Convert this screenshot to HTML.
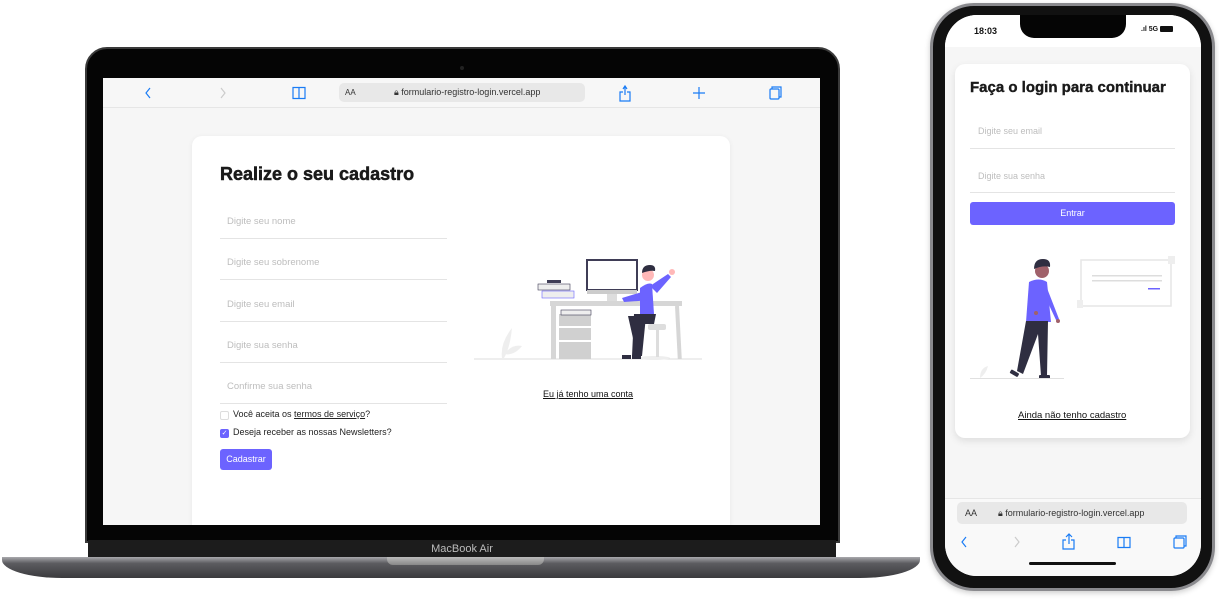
<!DOCTYPE html>
<html><head><meta charset="utf-8"><style>
*{margin:0;padding:0;box-sizing:border-box}
body{width:1219px;height:603px;background:#fff;position:relative;overflow:hidden;font-family:"Liberation Sans",sans-serif}
.abs{position:absolute}
.lap{left:85px;top:47px;width:755px;height:496px;background:#050505;border-radius:22px 22px 0 0;border:2px solid #3a3a3a}
.scr{left:103px;top:78px;width:717px;height:447px;background:#f6f6f6;overflow:hidden}
.bar{left:0;top:0;width:717px;height:30px;background:#f7f7f7;border-bottom:1px solid #e6e6e6}
.url{left:236px;top:5px;width:246px;height:19px;background:#e8e8e8;border-radius:5px;font-size:9px;color:#333;line-height:19px}
.card{left:89px;top:58px;width:538px;height:400px;background:#fff;border-radius:10px;box-shadow:0 1px 6px rgba(0,0,0,.06)}
.in{position:absolute;left:28px;width:227px;height:41px;border-bottom:1px solid #e4e4e4;font-size:9.5px;color:#bdbdbd;padding:18px 0 0 7px}
.chin{left:88px;top:540px;width:748px;height:18px;background:#1c1c1c;color:#bbb;font-size:11px;text-align:center;line-height:18px}
.base{left:2px;top:557px;width:918px;height:21px;background:linear-gradient(#a9a9ad,#5c5c60 30%,#3a3a3d);border-radius:0 0 60px 60px/0 0 18px 18px}
.ph{left:930px;top:3px;width:285px;height:588px;background:#111;border-radius:44px;border:3px solid #8a8a8e;box-shadow:0 2px 6px rgba(0,0,0,.2)}
.ps{left:945px;top:15px;width:256px;height:561px;background:#f6f6f6;border-radius:32px;overflow:hidden}
</style></head><body>
<div class="abs lap"></div>
<div class="abs" style="left:460px;top:66px;width:4px;height:4px;border-radius:50%;background:#222"></div>
<div class="abs scr">
 <div class="abs bar">
  <svg class="abs" style="left:0;top:0" width="717" height="30" fill="none" stroke="#1a7cf5" stroke-width="1.2">
   <path d="M47 10l-4 5 4 5"/><path d="M118 10l4 5-4 5" stroke="#ccc"/>
   <path d="M190 9.5h6v11h-6zM196 9.5h6v11h-6z"/>
   <path d="M520 14h-3v9h10v-9h-3M520 11l2-3 2 3M522 8v9"/>
   <path d="M596 9v12M590 15h12"/>
   <rect x="667" y="11" width="9" height="10" rx="1"/><path d="M669 11v-2h9v10h-2"/>
   <path d="M476 11a4 4 0 1 0 2 3" stroke="#333"/>
  </svg>
  <div class="abs url"><span style="position:absolute;left:6px;font-size:8px">AA</span><span style="position:absolute;left:55px">&#128274;&#xFE0E; formulario-registro-login.vercel.app</span></div>
 </div>
 <div class="abs card">
  <div class="abs" style="left:28px;top:28px;font-size:18px;font-weight:900;color:#1a1a1a;-webkit-text-stroke:.5px #1a1a1a">Realize o seu cadastro</div>
  <div class="in" style="top:62px">Digite seu nome</div>
  <div class="in" style="top:103px">Digite seu sobrenome</div>
  <div class="in" style="top:145px">Digite seu email</div>
  <div class="in" style="top:186px">Digite sua senha</div>
  <div class="in" style="top:227px">Confirme sua senha</div>
  <div class="abs" style="left:28px;top:275px;width:9px;height:9px;border:1px solid #ddd;border-radius:2px"></div>
  <div class="abs" style="left:41px;top:273px;font-size:9px;color:#222">Você aceita os <u>termos de serviço</u>?</div>
  <div class="abs" style="left:28px;top:293px;width:9px;height:9px;background:#6c63ff;border-radius:2px;color:#fff;font-size:7px;line-height:9px;text-align:center">✓</div>
  <div class="abs" style="left:41px;top:291px;font-size:9px;color:#222">Deseja receber as nossas Newsletters?</div>
  <div class="abs" style="left:28px;top:313px;width:52px;height:21px;background:#6c63ff;border-radius:3px;color:#fff;font-size:9px;line-height:21px;text-align:center">Cadastrar</div>
  <svg class="abs" style="left:280px;top:122px" width="232" height="106">
   <path d="M30 100q-2-15 10-30q-2 20-8 30z" fill="#eee"/><path d="M32 96q8-10 18-8q-8 10-18 8z" fill="#eee"/>
   <line x1="2" y1="101" x2="230" y2="101" stroke="#ddd"/>
   <rect x="78" y="43" width="132" height="5" fill="#d6d6d6"/>
   <rect x="79" y="48" width="5" height="53" fill="#d6d6d6"/><rect x="203" y="48" width="4" height="53" fill="#d6d6d6" transform="rotate(-3 205 48)"/>
   <rect x="87" y="56" width="32" height="12" fill="#d0d0d0"/><rect x="87" y="70" width="32" height="12" fill="#d0d0d0"/><rect x="87" y="84" width="32" height="17" fill="#d0d0d0"/>
   <rect x="89" y="52" width="30" height="5" fill="#eee" stroke="#3f3d56" stroke-width=".6"/>
   <rect x="66" y="26" width="32" height="6" fill="#eee" stroke="#3f3d56" stroke-width=".6"/>
   <rect x="70" y="33" width="32" height="7" fill="#eee" stroke="#6c63ff" stroke-width=".6"/>
   <rect x="75" y="22" width="14" height="3" fill="#3f3d56"/>
   <rect x="115" y="2" width="50" height="30" fill="#fff" stroke="#3f3d56" stroke-width="2"/>
   <rect x="115" y="32" width="50" height="4" fill="#ccc"/><rect x="135" y="36" width="10" height="7" fill="#ddd"/>
   <path d="M168 30q8-6 12-4l2 30q-10 2-14 0z" fill="#6c63ff"/>
   <path d="M150 40l20-6l10 8l-28 2z" fill="#6c63ff"/>
   <path d="M178 28l18-12l3 3l-14 16z" fill="#6c63ff"/>
   <circle cx="200" cy="14" r="3" fill="#ffb8b8"/>
   <circle cx="176" cy="17" r="6" fill="#ffb8b8"/><path d="M170 15q0-8 8-8q6 0 5 6q-5-1-13 2z" fill="#2f2e41"/>
   <path d="M162 56h22l-2 10h-12l-4 32h-6z" fill="#2f2e41"/><path d="M156 58h18l-4 40h-5z" fill="#2f2e41"/>
   <ellipse cx="182" cy="100" rx="16" ry="2" fill="#eee"/>
   <rect x="176" y="66" width="18" height="6" rx="2" fill="#ddd"/><rect x="184" y="72" width="3" height="27" fill="#ddd"/>
   <rect x="150" y="97" width="9" height="4" fill="#2f2e41"/><rect x="160" y="97" width="9" height="4" fill="#2f2e41"/>
  </svg>
  <div class="abs" style="left:351px;top:253px;font-size:9px;color:#111;text-decoration:underline">Eu já tenho uma conta</div>
 </div>
</div>
<div class="abs chin">MacBook Air</div>
<div class="abs base"></div>
<div class="abs" style="left:387px;top:557px;width:157px;height:8px;background:linear-gradient(#bbb,#888);border-radius:0 0 6px 6px"></div>

<div class="abs ph"></div>
<div class="abs ps">
 <div class="abs" style="left:0;top:0;width:256px;height:32px;background:#fff"></div>
 <div class="abs" style="left:29px;top:11px;font-size:9px;font-weight:bold;color:#111">18:03</div>
 <div class="abs" style="left:196px;top:11px;font-size:7px;font-weight:bold;color:#111">.ıl 5G <span style="display:inline-block;width:13px;height:6px;background:#111;border-radius:1px;vertical-align:middle"></span></div>
 <div class="abs" style="left:75px;top:0;width:106px;height:23px;background:#050505;border-radius:0 0 14px 14px"></div>
 <div class="abs" style="left:10px;top:49px;width:235px;height:374px;background:#fff;border-radius:10px;box-shadow:0 3px 8px rgba(0,0,0,.1)"></div>
 <div class="abs" style="left:25px;top:64px;font-size:15px;font-weight:900;color:#1a1a1a;-webkit-text-stroke:.4px #1a1a1a">Faça o login para continuar</div>
 <div class="abs" style="left:25px;top:105px;width:205px;height:29px;border-bottom:1px solid #e4e4e4;font-size:9px;color:#bdbdbd;padding:6px 0 0 8px">Digite seu email</div>
 <div class="abs" style="left:25px;top:148px;width:205px;height:30px;border-bottom:1px solid #e4e4e4;font-size:9px;color:#bdbdbd;padding:8px 0 0 8px">Digite sua senha</div>
 <div class="abs" style="left:25px;top:187px;width:205px;height:23px;background:#6c63ff;border-radius:3px;color:#fff;font-size:9px;line-height:23px;text-align:center">Entrar</div>
 <svg class="abs" style="left:25px;top:236px" width="205" height="135">
  <rect x="111" y="9" width="90" height="46" fill="#fff" stroke="#e6e6e6" stroke-width="1.5"/>
  <rect x="122" y="24" width="70" height="1.5" fill="#ddd"/><rect x="122" y="29" width="70" height="1.5" fill="#ddd"/><rect x="178" y="37" width="12" height="1.5" fill="#6c63ff"/>
  <rect x="198" y="5" width="8" height="8" fill="#eee"/><rect x="107" y="49" width="6" height="8" fill="#eee"/>
  <circle cx="72" cy="20" r="7" fill="#a0616a"/><path d="M64 18q0-10 9-10q8 0 7 8q-7-2-16 2z" fill="#2f2e41"/>
  <path d="M59 31q10-5 18 0l4 40h-25z" fill="#6c63ff"/><path d="M75 32l14 36l-3 1l-13-28z" fill="#6c63ff"/>
  <circle cx="88" cy="70" r="2" fill="#a0616a"/><circle cx="66" cy="62" r="2" fill="#a0616a"/>
  <path d="M56 70h22l-1 55h-6l-3-42l-15 40l-6-3z" fill="#2f2e41"/>
  <rect x="69" y="124" width="11" height="4" rx="1" fill="#2f2e41"/><rect x="40" y="120" width="9" height="4" rx="1" fill="#2f2e41" transform="rotate(30 44 122)"/>
  <path d="M10 127q0-10 8-12q-2 8-8 12z" fill="#eee"/>
  <line x1="0" y1="127.5" x2="94" y2="127.5" stroke="#e0e0e0"/>
 </svg>
 <div class="abs" style="left:73px;top:395px;font-size:9.5px;color:#111;text-decoration:underline">Ainda não tenho cadastro</div>
 <div class="abs" style="left:0;top:483px;width:256px;height:78px;background:#f9f9f9;border-top:1px solid #e6e6e6"></div>
 <div class="abs" style="left:12px;top:487px;width:230px;height:22px;background:#e8e8e8;border-radius:5px;font-size:9px;color:#333;line-height:22px"><span style="position:absolute;left:8px">AA</span><span style="position:absolute;left:41px">&#128274;&#xFE0E; formulario-registro-login.vercel.app</span></div>
 <svg class="abs" style="left:0;top:513px" width="256" height="48" fill="none" stroke="#1a7cf5" stroke-width="1.2">
  <path d="M226 -18a5 5 0 1 0 2 4" stroke="#333"/>
  <path d="M21 9l-4 5 4 5"/><path d="M70 9l4 5-4 5" stroke="#ccc"/>
  <path d="M121 12h-3v9h11v-9h-3M121 9l3-3 3 3M124 6v10"/>
  <path d="M173 9.5h6v10h-6zM179 9.5h6v10h-6z"/>
  <rect x="229" y="10" width="10" height="10" rx="1"/><path d="M231 10v-2h10v10h-2"/>
 </svg>
 <div class="abs" style="left:84px;top:547px;width:87px;height:3px;background:#111;border-radius:2px"></div>
</div>
</body></html>
